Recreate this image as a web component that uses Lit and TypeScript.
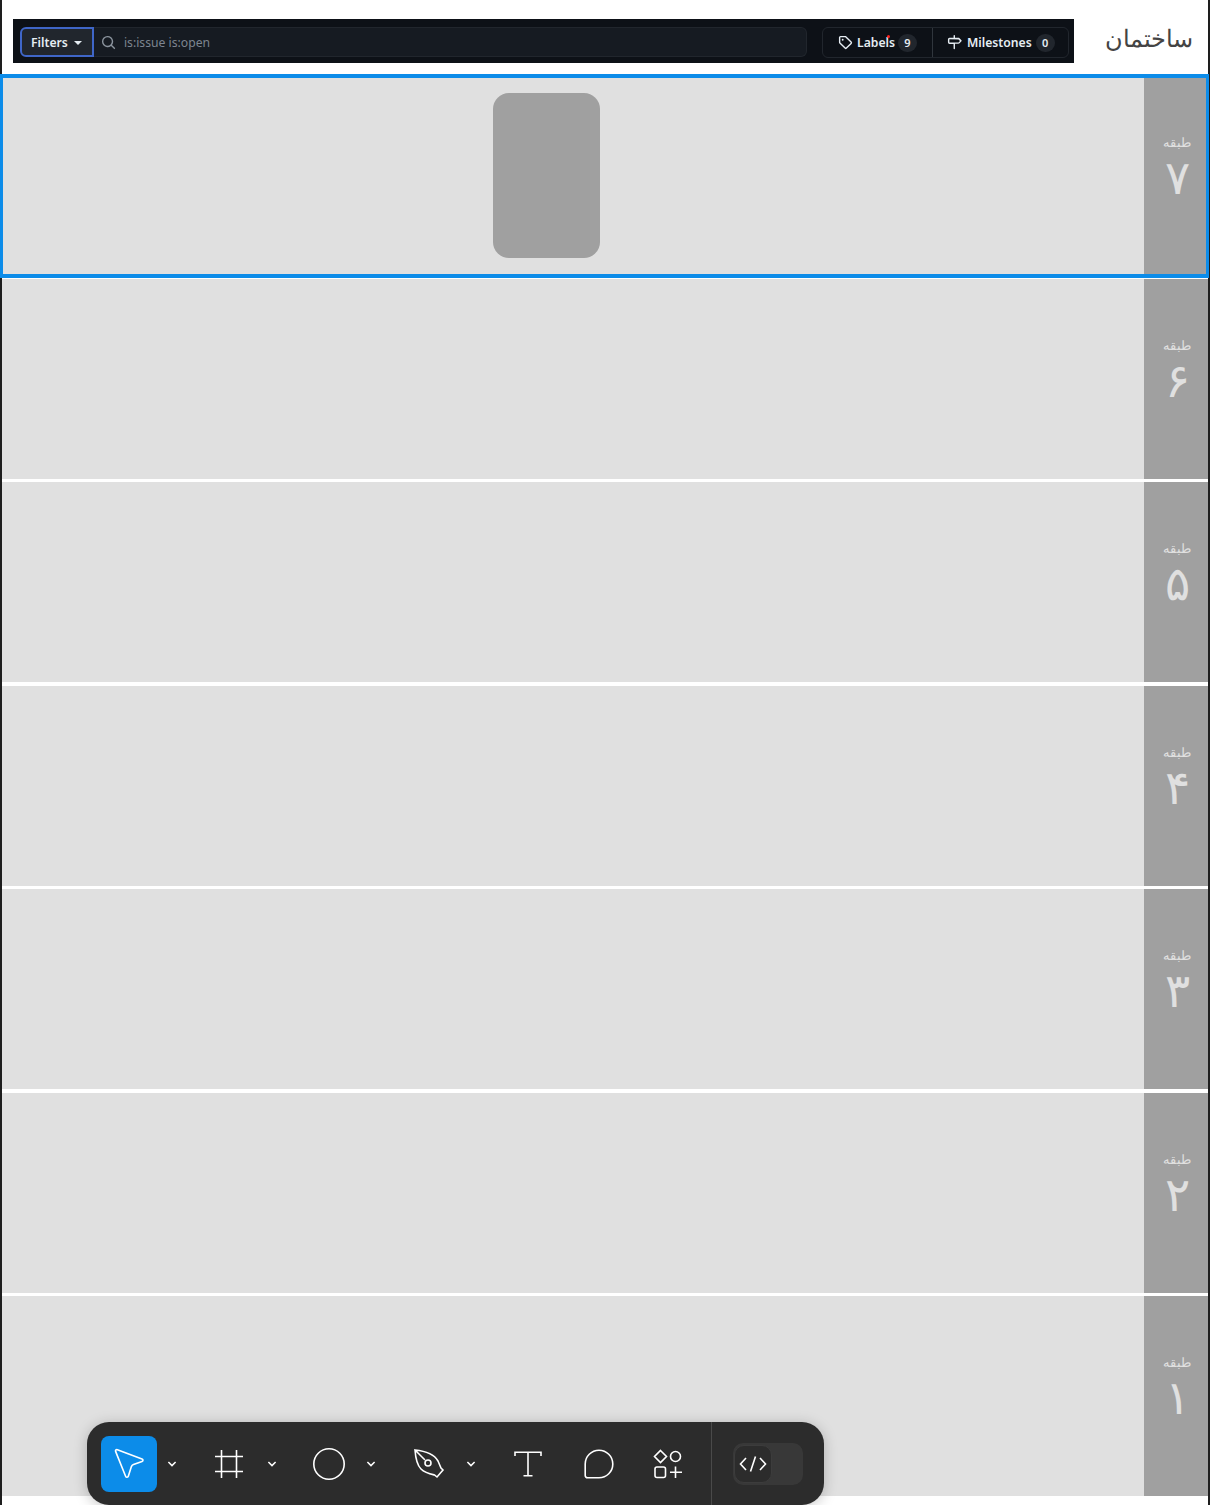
import { LitElement, html, css, svg } from "lit";
import { customElement } from "lit/decorators.js";

const FLOORS = ["۷", "۶", "۵", "۴", "۳", "۲", "۱"];

const chevron = html`<svg class="chev" width="10" height="8" viewBox="0 0 10 8"><path d="M1.4 2 L5 5.6 L8.6 2" fill="none" stroke="#fff" stroke-width="1.5"/></svg>`;

const ic = (w: number, h: number, body: unknown) =>
  html`<svg width=${w} height=${h} viewBox="0 0 ${w} ${h}" fill="none" stroke="#fff" stroke-width="1.6">${body}</svg>`;

@customElement("app-root")
export class AppRoot extends LitElement {
  static styles = css`
    :host {
      display: block;
      position: relative;
      height: 1505px;
      box-sizing: border-box;
      background: #fff;
      border-left: 2px solid #1e1e1e;
      border-right: 2px solid #1e1e1e;
      font-family: "Noto Sans", sans-serif;
    }
    .top {
      height: 75.6px;
      box-sizing: border-box;
      padding: 19px 15px 0 11px;
      display: flex;
      align-items: flex-start;
      justify-content: space-between;
    }
    .gh {
      width: 1061px;
      height: 44px;
      flex: none;
      box-sizing: border-box;
      background: #0d1117;
      padding: 8px 5px 5px 7px;
      display: flex;
      align-items: flex-start;
      color: #e6edf3;
      font-size: 12.2px;
      font-weight: 600;
    }
    .filters {
      width: 74px;
      height: 30px;
      box-sizing: border-box;
      background: #21262d;
      border: 2px solid #3f66c8;
      border-radius: 6px 0 0 6px;
      display: flex;
      align-items: center;
      padding: 1px 0 0 9px;
      gap: 6px;
    }
    .caret {
      width: 0;
      height: 0;
      border-left: 4px solid transparent;
      border-right: 4px solid transparent;
      border-top: 4px solid #e6edf3;
    }
    .search {
      width: 714px;
      height: 30px;
      box-sizing: border-box;
      background: #161b22;
      border: 1px solid #21262d;
      border-left: 0;
      border-radius: 0 6px 6px 0;
      display: flex;
      align-items: center;
      padding: 1px 0 0 7px;
      gap: 8px;
      color: #7d8590;
      font-weight: 400;
      margin-right: 15px;
    }
    .group {
      position: relative;
      width: 247px;
      height: 31px;
      box-sizing: border-box;
      border: 1px solid #21262d;
      border-radius: 6px;
      display: flex;
      align-items: center;
    }
    .seg {
      height: 100%;
      box-sizing: border-box;
      display: flex;
      align-items: center;
    }
    .seg.a { width: 110px; padding-left: 15px; gap: 4px; border-right: 1px solid #30363d; }
    .seg.b { width: 135px; padding-left: 14px; gap: 5px; }
    .badge {
      min-width: 19px;
      height: 18px;
      border-radius: 9px;
      background: #21262d;
      font-size: 11px;
      display: flex;
      align-items: center;
      justify-content: center;
      margin-left: -1px;
    }
    .dot {
      position: absolute;
      left: 64px;
      top: 7px;
      width: 3px;
      height: 3px;
      border-radius: 50%;
      background: #ff2020;
    }
    .title {
      font-family: "Liberation Serif", "DejaVu Serif", serif;
      font-size: 24px;
      font-weight: 400;
      color: #444;
      line-height: 40px;
    }
    .rows {
      display: flex;
      flex-direction: column;
      gap: 3.4px;
    }
    .row {
      position: relative;
      height: 200px;
      background: #e0e0e0;
      display: flex;
    }
    .canvas {
      flex: 1;
      display: flex;
      align-items: center;
      padding-left: 491px;
    }
    .block {
      width: 107px;
      height: 165px;
      background: #a0a0a0;
      border-radius: 16px;
    }
    .side {
      width: 64px;
      background: #a0a0a0;
      color: #e0e0e0;
      display: flex;
      flex-direction: column;
      align-items: center;
      padding: 56px 0 0 2px;
      box-sizing: border-box;
      font-family: "Liberation Serif", "DejaVu Serif", serif;
    }
    .side .label { font-size: 13px; line-height: 22px; }
    .side .num { font-size: 47px; line-height: 48px; margin-left: 1px; }
    .sel {
      position: absolute;
      top: -2px;
      bottom: -2px;
      left: -2px;
      right: -1px;
      border: 4px solid #0c8ce9;
      border-left-width: 3px;
      border-right-width: 3px;
      pointer-events: none;
    }
    .bar {
      position: absolute;
      left: 85px;
      top: 1422px;
      width: 737px;
      height: 83px;
      box-sizing: border-box;
      background: #2c2c2c;
      border-radius: 22px;
      box-shadow: 0 2px 14px rgba(0, 0, 0, 0.22);
      display: flex;
      align-items: center;
      padding: 0 21px 0 14px;
      gap: 14px;
    }
    .tool {
      width: 56px;
      height: 56px;
      border-radius: 8px;
      display: flex;
      align-items: center;
      justify-content: center;
      flex: none;
    }
    .tool.on { background: #0c8ce9; }
    .tool.text { margin-left: -1px; }
    .tool.comment { margin-left: 1px; margin-right: -1px; }
    .pair { display: flex; align-items: center; flex: none; }
    .chevslot {
      width: 30px;
      display: flex;
      justify-content: center;
      align-items: center;
    }
    .chevslot.nudge { padding-right: 2px; width: 28px; }
    .div {
      width: 1px;
      height: 83px;
      background: #4a4a4a;
      flex: none;
      margin-left: 1px;
      margin-right: 7px;
    }
    .toggle {
      width: 70px;
      height: 42px;
      border-radius: 10px;
      background: #383838;
      display: flex;
      align-items: center;
      padding-left: 1px;
      box-sizing: border-box;
      flex: none;
    }
    .knob {
      width: 38px;
      height: 38px;
      box-sizing: border-box;
      border: 1px solid #3c3c3c;
      border-radius: 10px;
      background: #2c2c2c;
      display: flex;
      align-items: center;
      justify-content: center;
    }
  `;

  render() {
    const pair = (icon: unknown, on = false, nudge = false) => html`<div class="pair">
      <div class="tool ${on ? "on" : ""}">${icon}</div>
      <div class="chevslot ${nudge ? "nudge" : ""}">${chevron}</div>
    </div>`;
    return html`
      <div class="top">
        <div class="gh">
          <div class="filters"><span>Filters</span><span class="caret"></span></div>
          <div class="search">
            <svg width="15" height="15" viewBox="0 0 16 16" fill="#8b949e"><path d="M10.68 11.74a6 6 0 0 1-7.92-8.98 6 6 0 0 1 8.98 7.92l3.04 3.04a.75.75 0 1 1-1.06 1.06ZM11.5 7a4.5 4.5 0 1 0-9 0 4.5 4.5 0 0 0 9 0Z"/></svg>
            <span>is:issue is:open</span>
          </div>
          <div class="group">
            <div class="seg a">
              <svg width="15" height="15" viewBox="0 0 16 16" fill="#e6edf3"><path d="M1 7.78V2.75C1 1.78 1.78 1 2.75 1h5.03c.46 0 .9.18 1.24.51l5.5 5.5a1.75 1.75 0 0 1 0 2.48l-5.03 5.03a1.75 1.75 0 0 1-2.48 0l-5.5-5.5A1.75 1.75 0 0 1 1 7.78Zm1.5 0c0 .07.03.13.07.18l5.5 5.5a.25.25 0 0 0 .36 0l5.03-5.03a.25.25 0 0 0 0-.36l-5.5-5.5a.25.25 0 0 0-.18-.07H2.75a.25.25 0 0 0-.25.25ZM6 5a1 1 0 1 1-2 0 1 1 0 0 1 2 0Z"/></svg>
              <span>Labels</span><span class="badge">9</span>
            </div>
            <div class="seg b">
              <svg width="15" height="15" viewBox="0 0 16 16" fill="#e6edf3"><path d="M7.75 0a.75.75 0 0 1 .75.75V3h3.63c.46 0 .9.18 1.24.51l2.06 2.07a.75.75 0 0 1 0 1.06l-2.06 2.07a1.75 1.75 0 0 1-1.24.51H8.5v5.25a.75.75 0 0 1-1.5 0V9.5H2.75A1.75 1.75 0 0 1 1 7.75v-3C1 3.78 1.78 3 2.75 3H7V.75A.75.75 0 0 1 7.75 0ZM2.75 4.5a.25.25 0 0 0-.25.25v3c0 .14.11.25.25.25h9.38a.25.25 0 0 0 .18-.07l1.53-1.54-1.53-1.52a.25.25 0 0 0-.18-.07Z"/></svg>
              <span>Milestones</span><span class="badge">0</span>
            </div>
            <span class="dot"></span>
          </div>
        </div>
        <div class="title">ساختمان</div>
      </div>
      <div class="rows">
        ${FLOORS.map(
          (f, i) => html`<div class="row">
            <div class="canvas">${i === 0 ? html`<div class="block"></div>` : ""}</div>
            <div class="side"><span class="label">طبقه</span><span class="num">${f}</span></div>
            ${i === 0 ? html`<div class="sel"></div>` : ""}
          </div>`
        )}
      </div>
      <div class="bar">
        ${pair(ic(32, 32, svg`<path d="M2.6 3.4 C2.2 2 3.2 1.4 4.4 1.8 L29 11 C30.4 11.6 30.2 13 29 13.4 L20.5 16.6 C19.4 17 18.8 17.6 18.4 18.6 L15.4 28 C15 29.6 13.2 29.6 12.6 28.2 Z"/>`), true)}
        ${pair(ic(30, 30, svg`<path d="M1 7.5H29M1 22.5H29M7.5 1V29M22.5 1V29"/>`))}
        ${pair(ic(32, 32, svg`<circle cx="16" cy="16" r="15.2"/>`), false, true)}
        ${pair(ic(32, 32, svg`<path d="M2 2 C12 3 21 6 25 13 L28 20 L30 22 L24 29 L21.5 27 C17 26 12 25 8 21 C4 17 2.5 9 2 2Z M2 2 L12 12"/><circle cx="15" cy="15" r="3"/>`), false, true)}
        <div class="tool text">${ic(28, 26, svg`<path d="M1 5V1.2H27V5M14 1.2V24.8M9.5 24.8H18.5"/>`)}</div>
        <div class="tool comment">${ic(30, 30, svg`<path d="M15 1.2 A13.8 13.8 0 0 1 15 28.8 H3.5 A2.3 2.3 0 0 1 1.2 26.5 V15 A13.8 13.8 0 0 1 15 1.2Z"/>`)}</div>
        <div class="tool">${ic(30, 30, svg`<path d="M7.5 1.5 L13.5 7.5 L7.5 13.5 L1.5 7.5Z"/><circle cx="22.5" cy="7.5" r="5"/><rect x="2" y="18" width="10.5" height="10.5" rx="2"/><path d="M22.5 17.5V29M17 23.2H29"/>`)}</div>
        <div class="div"></div>
        <div class="toggle">
          <div class="knob">${ic(28, 18, svg`<path d="M7 3L1.5 9L7 15M21 3L26.5 9L21 15M16.5 1.5L11.5 16.5"/>`)}</div>
        </div>
      </div>
    `;
  }
}
